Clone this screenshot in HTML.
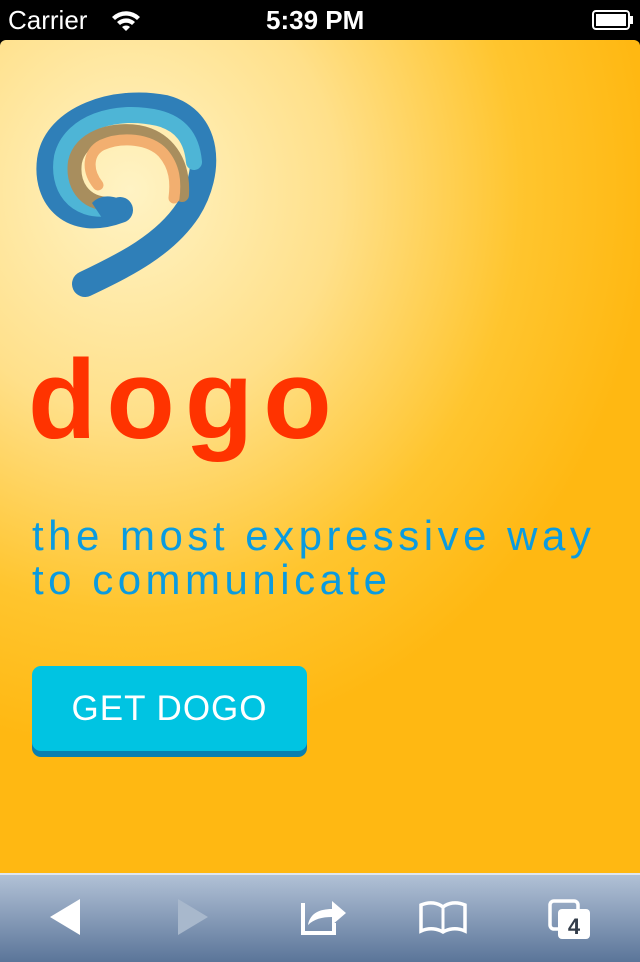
<!DOCTYPE html>
<html><head><style>
body{margin:0;width:640px;height:960px;overflow:hidden;font-family:"Liberation Sans",sans-serif;position:relative;background:#000}
.sb{position:absolute;top:0;left:0;width:640px;height:40px;background:#000;color:#fff;font-size:26px}
.main{position:absolute;top:40px;left:0;width:640px;height:833px;border-radius:6px 6px 0 0;background:radial-gradient(ellipse 520px 560px at 130px 150px,#fff3c4 0%,#ffe08a 40%,#ffc52e 75%,#ffb812 100%)}
.dogo{position:absolute;left:28px;top:304px;font-size:112px;font-weight:bold;color:#ff3300;letter-spacing:10px;line-height:1}
.tag{position:absolute;left:32px;top:474px;font-size:42px;color:#0a9be0;line-height:44px;letter-spacing:4.5px}
.btn{position:absolute;left:32px;top:626px;width:275px;height:85px;background:#00c4e2;border-radius:9px;box-shadow:0 6px 0 #0a7fb0;color:#fff;font-size:35px;text-align:center;line-height:85px;letter-spacing:1px}
.tb{position:absolute;top:873px;left:0;width:640px;height:87px;background:linear-gradient(#b1c1d6,#5b7599);border-top:2px solid #dfe6ef}
</style></head><body>
<div class="sb">
<span style="position:absolute;left:8px;top:5px">Carrier</span>
<svg style="position:absolute;left:110px;top:8px" width="32" height="24" viewBox="0 0 32 24"><path d="M2 9a20 20 0 0 1 28 0l-3 3a16 16 0 0 0-22 0z M7 14a13 13 0 0 1 18 0l-3 3a9 9 0 0 0-12 0z M12 19a6 6 0 0 1 8 0l-4 4z" fill="#fff"/></svg>
<span style="position:absolute;left:266px;top:5px;font-weight:bold">5:39 PM</span>
<svg style="position:absolute;left:592px;top:10px" width="42" height="20"><rect x="1" y="1" width="36" height="18" rx="3" fill="none" stroke="#fff" stroke-width="2"/><rect x="4" y="4" width="30" height="12" fill="#fff"/><rect x="38" y="6" width="3" height="8" fill="#fff"/></svg>
</div>
<div class="main">
<svg style="position:absolute;left:30px;top:50px" width="200" height="210" viewBox="30 90 200 210">
<path d="M120 210 C72 228 45 198 50 160 C56 118 115 98 165 108 C210 120 212 172 188 210 C165 245 125 265 85 284" fill="none" stroke="#2f7fb8" stroke-width="26" stroke-linecap="round"/>
<path d="M112 208 C72 214 57 185 62 157 C70 123 115 108 158 118 C182 124 192 140 194 162" fill="none" stroke="#4eb5d6" stroke-width="16" stroke-linecap="round"/>
<path d="M112 204 C82 205 72 182 75 162 C80 138 110 128 138 132 C166 137 184 160 182 195" fill="none" stroke="#a88e5e" stroke-width="14" stroke-linecap="round"/>
<path d="M98 185 C86 170 88 152 102 145 C122 136 150 139 163 153 C175 167 176 182 174 198" fill="none" stroke="#f2af70" stroke-width="11" stroke-linecap="round"/>
<path d="M92 203 C100 194 116 194 126 204 C129 216 118 223 104 221" fill="#2f7fb8"/>
</svg>
<div class="dogo">dogo</div>
<div class="tag">the most expressive way<br>to communicate</div>
<div class="btn">GET DOGO</div>
</div>
<div class="tb">
<svg style="position:absolute;left:48px;top:22px" width="34" height="40"><path d="M32 2 L2 20 L32 38Z" fill="#fff"/></svg>
<svg style="position:absolute;left:176px;top:22px" width="34" height="40"><path d="M2 2 L32 20 L2 38Z" fill="#a8b8cc"/></svg>
<svg style="position:absolute;left:300px;top:20px" width="52" height="44"><path d="M3 8 V38 H34 V28" fill="none" stroke="#fff" stroke-width="4"/><path d="M8 30 C10 18 20 14 32 14 V6 L46 18 L32 30 V22 C22 22 14 24 8 30Z" fill="#fff"/></svg>
<svg style="position:absolute;left:418px;top:26px" width="52" height="34"><path d="M3 4 C12 0 20 2 25 6 C30 2 38 0 47 4 V30 C38 26 30 28 25 31 C20 28 12 26 3 30Z" fill="none" stroke="#fff" stroke-width="3.5"/><path d="M25 6 V30" stroke="#fff" stroke-width="3"/></svg>
<svg style="position:absolute;left:548px;top:24px" width="48" height="44"><rect x="2" y="2" width="28" height="28" rx="4" fill="none" stroke="#fff" stroke-width="3.5"/><rect x="10" y="10" width="32" height="30" rx="4" fill="#fff"/><text x="26" y="35" font-size="22" font-weight="bold" fill="#333d4a" text-anchor="middle" font-family="Liberation Sans">4</text></svg>
</div>
</body></html>
